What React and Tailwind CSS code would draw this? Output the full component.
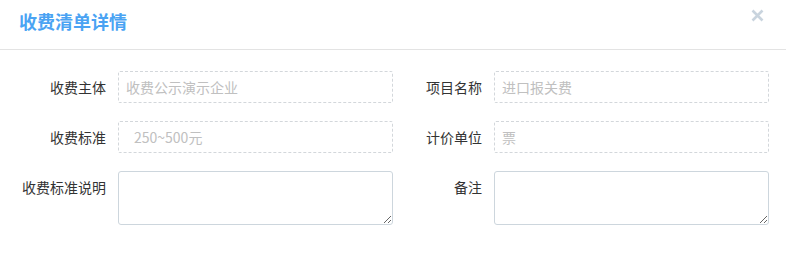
import React from "react";

const font = { fontFamily: '"Noto Sans CJK SC", "Noto Sans", sans-serif' };

function Label({ children, w }) {
  return (
    <div className={`${w} shrink-0 pr-3 text-right text-[14px] leading-8 text-[#333]`}>{children}</div>
  );
}

function Input({ placeholder, pl = "pl-[7px]" }) {
  return (
    <div className={`w-[275px] h-8 shrink-0 border border-dashed border-[#d3d7db] rounded-[2px] ${pl} flex items-center text-[14px] text-[#c0c0c0]`}>
      {placeholder}
    </div>
  );
}

function Area() {
  return (
    <textarea className="w-[275px] h-[54px] shrink-0 border border-[#cdd6dd] rounded-[3px] bg-white outline-none" />
  );
}

export default function App() {
  return (
    <div className="w-[786px] h-[255px] bg-white relative" style={font}>
      <div className="h-[50px] border-b border-[#e3e3e3] pl-[19px] pt-[8px]">
        <div className="text-[18px] font-bold leading-[26px] text-[#4aa3f3]">收费清单详情</div>
      </div>
      <button className="absolute left-[751px] top-[9px] w-[13px] h-[13px]">
        <svg viewBox="0 0 13 13" width="13" height="13">
          <path d="M1.5 1.5 L11.5 11.5 M11.5 1.5 L1.5 11.5" stroke="#c9d4de" strokeWidth="2.6" strokeLinecap="butt" />
        </svg>
      </button>
      <div className="pt-[21px] flex flex-col gap-[18px]">
        <div className="flex">
          <Label w="w-[118px]">收费主体</Label>
          <Input placeholder="收费公示演示企业" />
          <Label w="w-[101px]">项目名称</Label>
          <Input placeholder="进口报关费" />
        </div>
        <div className="flex">
          <Label w="w-[118px]">收费标准</Label>
          <Input placeholder="250~500元" pl="pl-[15px]" />
          <Label w="w-[101px]">计价单位</Label>
          <Input placeholder="票" />
        </div>
        <div className="flex">
          <Label w="w-[118px]">收费标准说明</Label>
          <Area />
          <Label w="w-[101px]">备注</Label>
          <Area />
        </div>
      </div>
    </div>
  );
}
